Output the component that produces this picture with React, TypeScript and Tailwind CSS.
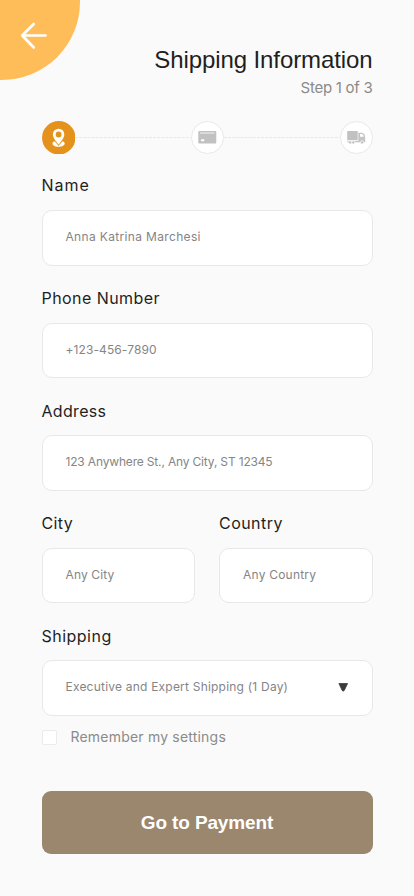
import type { ReactNode } from "react";

const FONT = "font-['Inter','Open_Sans',sans-serif]";

function Field({ label, value, labelClass, valueClass, children }: {
  label: string;
  value: string;
  labelClass: string;
  valueClass: string;
  children?: ReactNode;
}) {
  return (
    <div className="min-w-0 flex-1">
      <div className="h-6 text-base leading-[22.5px] text-[#1f1f1f]">
        <span className={labelClass}>{label}</span>
      </div>
      <div className="mt-3 flex h-[55.5px] items-center justify-between rounded-[10px] border border-[#e8e8e8] bg-white pr-[23.5px] pl-[23px]">
        <span className={`whitespace-nowrap pb-[1.5px] text-xs leading-4 text-[#858585] ${valueClass}`}>{value}</span>
        {children}
      </div>
    </div>
  );
}

function Dashes() {
  return (
    <svg className="h-[3px] flex-1" height="3">
      <line x1="0" y1="1.5" x2="100%" y2="1.5" stroke="#e9e9e9" strokeWidth="1.2" strokeDasharray="3.2 0.9" />
    </svg>
  );
}

export default function App() {
  return (
    <div className={`relative h-[896px] w-full overflow-hidden bg-[#fafafa] px-[41.5px] pt-[45px] ${FONT}`}>
      <button aria-label="Back" className="absolute top-0 left-0 h-20 w-20">
        <svg width="80" height="80" viewBox="0 0 80 80" fill="none">
          <path d="M0 0H80V2A78 78 0 0 1 2 80H0Z" fill="#ffbd59" />
          <path d="M45.5 35.5H22.2M33.7 24L22.2 35.5L33.7 47.5" stroke="white" strokeWidth="2.7" strokeLinecap="round" strokeLinejoin="round" />
        </svg>
      </button>

      <header className="text-right">
        <h1 className="h-[30px] font-['Liberation_Sans',sans-serif] text-2xl leading-[30px] tracking-[-0.1px] text-[#1f1f1f]">Shipping Information</h1>
        <p className="mt-[3px] h-5 text-[15px] leading-5 tracking-[-0.27px] text-[#8a8a8a]">Step 1 of 3</p>
      </header>

      <div className="mt-[22.5px] flex h-[33.5px] items-center">
        <svg width="33.5" height="33.5" viewBox="0 0 33.5 33.5">
          <circle cx="16.75" cy="16.75" r="16.7" fill="#e4921b" />
          <path d="M13 20.3C11.5 20.4 10.5 21.3 10.5 22.6C10.5 24.5 12.8 25.8 16.6 25.8S22.7 24.5 22.7 22.6C22.7 21.3 21.6 20.4 20.1 20.3L16.6 24.4Z" fill="white" />
          <path fillRule="evenodd" d="M16.6 7.7A5.7 5.7 0 0 0 10.9 13.4C10.9 16.4 13.9 20.2 16.6 23.6C19.3 20.2 22.3 16.4 22.3 13.4A5.7 5.7 0 0 0 16.6 7.7ZM16.6 10.6A2.9 2.9 0 1 1 16.6 16.4A2.9 2.9 0 0 1 16.6 10.6Z" fill="white" />
          <path d="M12.7 20.1L16.6 24.7L20.5 20.1" fill="none" stroke="#e4921b" strokeWidth=".5" />
        </svg>
        <Dashes />
        <svg width="33" height="33" viewBox="0 0 33 33">
          <circle cx="16.5" cy="16.5" r="16" fill="white" stroke="#e8e8e8" />
          <rect x="7.3" y="10" width="18" height="12.5" rx="1" fill="#c1c1c1" />
          <rect x="9.1" y="11.2" width="14.4" height="1.7" fill="#dedede" />
          <rect x="9.8" y="18.2" width="3.7" height="2" rx="1" fill="white" />
        </svg>
        <Dashes />
        <svg width="33" height="33" viewBox="0 0 33 33">
          <circle cx="16.5" cy="16.5" r="16" fill="white" stroke="#e8e8e8" />
          <rect x="7.2" y="10" width="10.5" height="9.2" rx=".5" fill="#c1c1c1" />
          <path fillRule="evenodd" d="M18.3 11.7H22.2Q25.2 12.7 25.2 17V21.3H7.3V20H18.3ZM20 12.9V15.8H23.9Q23.3 13.1 21.9 12.9Z" fill="#c4c4c4" />
          <g fill="#c1c1c1" stroke="white" strokeWidth=".7">
            <circle cx="10.1" cy="21.4" r="1.6" /><circle cx="13.2" cy="21.4" r="1.6" /><circle cx="22" cy="21.4" r="1.6" />
          </g>
        </svg>
      </div>

      <main className="mt-5 flex flex-col gap-[21px]">
        <Field label="Name" value="Anna Katrina Marchesi" labelClass="tracking-[1px]" valueClass="tracking-[0.34px]" />
        <Field label="Phone Number" value="+123-456-7890" labelClass="tracking-[0.44px]" valueClass="tracking-[0.1px]" />
        <Field label="Address" value="123 Anywhere St., Any City, ST 12345" labelClass="inline-block pt-px tracking-[0.32px]" valueClass="tracking-[-0.17px]" />
        <div className="flex gap-6">
          <Field label="City" value="Any City" labelClass="tracking-[0.35px]" valueClass="tracking-[0.13px]" />
          <Field label="Country" value="Any Country" labelClass="tracking-[0.45px]" valueClass="tracking-[0.22px]" />
        </div>
        <Field label="Shipping" value="Executive and Expert Shipping (1 Day)" labelClass="inline-block pt-px tracking-[0.48px]" valueClass="tracking-[0.21px]">
          <svg width="10.5" height="9" viewBox="0 0 10.5 9">
            <path d="M.9 .5H9.6L6.2 7.5Q5.2 8.7 4.2 7.5Z" fill="#3b3b3b" stroke="#3b3b3b" strokeWidth=".8" strokeLinejoin="round" />
          </svg>
        </Field>
      </main>

      <label className="mt-3 flex h-5 items-center gap-3.5">
        <span className="h-[15px] w-[15px] rounded-[2px] border border-[#ebebeb] bg-white" />
        <span className="pb-[2px] text-sm leading-5 tracking-[0.2px] text-[#8a8a8a]">Remember my settings</span>
      </label>

      <button className="mt-[43px] flex h-[63.5px] w-full items-center justify-center rounded-[9px] bg-[#9b866e] pt-px font-['Liberation_Sans',sans-serif] text-[19px] leading-6 font-bold tracking-[-0.13px] text-white">Go to Payment</button>
    </div>
  );
}
